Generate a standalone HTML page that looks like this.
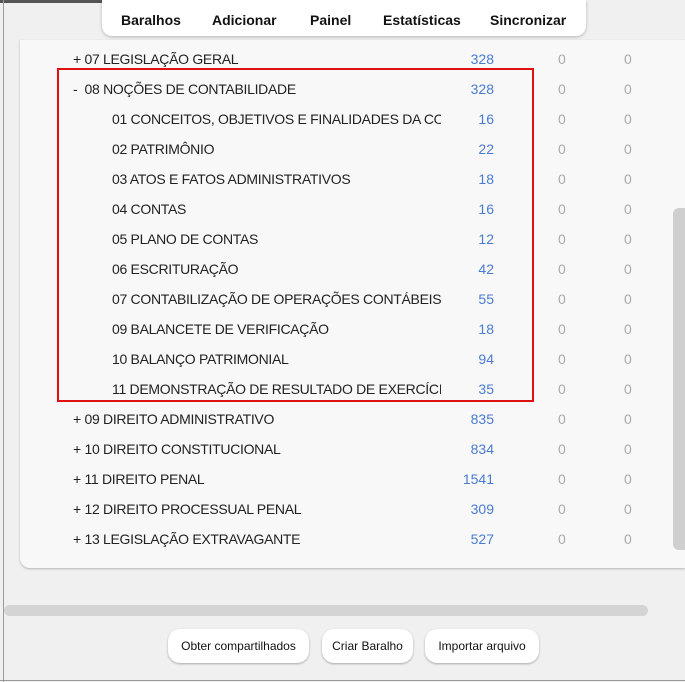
<!DOCTYPE html><html><head><meta charset="utf-8"><style>
body{margin:0;width:685px;height:682px;overflow:hidden;background:#f0f0f0;font-family:"Liberation Sans",sans-serif;position:relative}
.lb{position:absolute;left:3px;top:0;width:1px;height:682px;background:#9a9a9a}
.tb{position:absolute;left:0;top:0;width:300px;height:3px;background:#555}
.card{position:absolute;left:20px;top:40px;width:665px;height:528px;background:#f8f8f8;border-radius:0 0 0 10px;box-shadow:0 1px 2px rgba(0,0,0,.25)}
.nav{position:absolute;left:102px;top:0;width:484px;height:36px;background:#fff;border-radius:0 0 10px 10px;box-shadow:0 1px 3px rgba(0,0,0,.25);font-weight:bold;font-size:14px;color:#111}
.nav span{position:absolute;top:12px}
.row{position:absolute;left:0;height:30px;width:685px;font-size:14px;color:#222;transform-origin:left}
.row .n{position:absolute;top:7px;white-space:nowrap;letter-spacing:-.3px}
.row .c{position:absolute;right:191px;top:7px;color:#4a7bd0}
.row .z1{position:absolute;left:558px;top:7px;color:#aaa}
.row .z2{position:absolute;left:624px;top:7px;color:#aaa}
.red{position:absolute;left:57px;top:68px;width:473px;height:330px;border:2px solid #e01010}
.vs{position:absolute;left:673px;top:208px;width:12px;height:342px;background:#cfcfcf;border-radius:6px 0 0 6px}
.hs{position:absolute;left:4px;top:605px;width:644px;height:11px;background:#d4d4d4;border-radius:6px}
.btn{position:absolute;top:629px;height:34px;background:#fff;border-radius:12px;box-shadow:0 1px 2px rgba(0,0,0,.3);font-size:12px;color:#111;text-align:center;line-height:34px}
.bl{position:absolute;left:0;top:680px;width:685px;height:1px;background:#999}
</style></head><body>
<div class="tb"></div><div class="lb"></div>
<div class="card"></div>
<div class="vs"></div>
<div class="nav"><span style="left:19px">Baralhos</span><span style="left:110px">Adicionar</span><span style="left:208px">Painel</span><span style="left:281px">Estatísticas</span><span style="left:388px">Sincronizar</span></div>
<div class="row" style="top:44px"><span class="n" style="left:73px">+ 07 LEGISLAÇÃO GERAL</span><span class="c">328</span><span class="z1">0</span><span class="z2">0</span></div>
<div class="row" style="top:74px"><span class="n" style="left:73px">-&nbsp; 08 NOÇÕES DE CONTABILIDADE</span><span class="c">328</span><span class="z1">0</span><span class="z2">0</span></div>
<div class="row" style="top:104px"><span class="n" style="left:112px;width:329px;overflow:hidden">01 CONCEITOS, OBJETIVOS E FINALIDADES DA CONTABILIDADE</span><span class="c">16</span><span class="z1">0</span><span class="z2">0</span></div>
<div class="row" style="top:134px"><span class="n" style="left:112px">02 PATRIMÔNIO</span><span class="c">22</span><span class="z1">0</span><span class="z2">0</span></div>
<div class="row" style="top:164px"><span class="n" style="left:112px">03 ATOS E FATOS ADMINISTRATIVOS</span><span class="c">18</span><span class="z1">0</span><span class="z2">0</span></div>
<div class="row" style="top:194px"><span class="n" style="left:112px">04 CONTAS</span><span class="c">16</span><span class="z1">0</span><span class="z2">0</span></div>
<div class="row" style="top:224px"><span class="n" style="left:112px">05 PLANO DE CONTAS</span><span class="c">12</span><span class="z1">0</span><span class="z2">0</span></div>
<div class="row" style="top:254px"><span class="n" style="left:112px">06 ESCRITURAÇÃO</span><span class="c">42</span><span class="z1">0</span><span class="z2">0</span></div>
<div class="row" style="top:284px"><span class="n" style="left:112px;width:329px;overflow:hidden">07 CONTABILIZAÇÃO DE OPERAÇÕES CONTÁBEIS</span><span class="c">55</span><span class="z1">0</span><span class="z2">0</span></div>
<div class="row" style="top:314px"><span class="n" style="left:112px">09 BALANCETE DE VERIFICAÇÃO</span><span class="c">18</span><span class="z1">0</span><span class="z2">0</span></div>
<div class="row" style="top:344px"><span class="n" style="left:112px">10 BALANÇO PATRIMONIAL</span><span class="c">94</span><span class="z1">0</span><span class="z2">0</span></div>
<div class="row" style="top:374px"><span class="n" style="left:112px;width:329px;overflow:hidden">11 DEMONSTRAÇÃO DE RESULTADO DE EXERCÍCIO</span><span class="c">35</span><span class="z1">0</span><span class="z2">0</span></div>
<div class="row" style="top:404px"><span class="n" style="left:73px">+ 09 DIREITO ADMINISTRATIVO</span><span class="c">835</span><span class="z1">0</span><span class="z2">0</span></div>
<div class="row" style="top:434px"><span class="n" style="left:73px">+ 10 DIREITO CONSTITUCIONAL</span><span class="c">834</span><span class="z1">0</span><span class="z2">0</span></div>
<div class="row" style="top:464px"><span class="n" style="left:73px">+ 11 DIREITO PENAL</span><span class="c">1541</span><span class="z1">0</span><span class="z2">0</span></div>
<div class="row" style="top:494px"><span class="n" style="left:73px">+ 12 DIREITO PROCESSUAL PENAL</span><span class="c">309</span><span class="z1">0</span><span class="z2">0</span></div>
<div class="row" style="top:524px"><span class="n" style="left:73px">+ 13 LEGISLAÇÃO EXTRAVAGANTE</span><span class="c">527</span><span class="z1">0</span><span class="z2">0</span></div>
<div class="red"></div>
<div class="hs"></div>
<div class="btn" style="left:168px;width:141px">Obter compartilhados</div>
<div class="btn" style="left:322px;width:91px">Criar Baralho</div>
<div class="btn" style="left:425px;width:114px">Importar arquivo</div>
<div class="bl"></div>
</body></html>
